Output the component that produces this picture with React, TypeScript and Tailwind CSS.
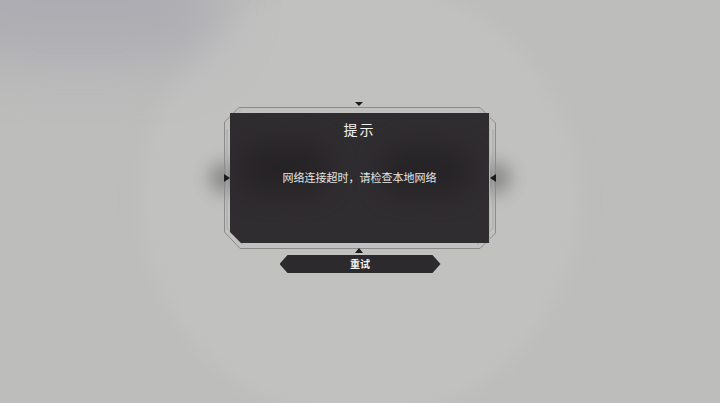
import React from 'react';

const cjk = { fontFamily: '"Noto Sans CJK SC", "Noto Sans", sans-serif' };

function Frame() {
    // decorative chamfered outline + the four little pointer marks
    return (
        <svg className="absolute inset-0 overflow-visible" width="272" height="142" viewBox="0 0 272 142">
            <polygon points="15,0.5 256,0.5 271.5,16 271.5,126 256,141.5 16,141.5 0.5,125 0.5,15" fill="none" stroke="#8c8b8c" strokeWidth="1" />
            <polyline points="3,22 3,121 19,138" fill="none" stroke="#a9a8a9" strokeWidth="1" />
            <polyline points="269,22 269,121 253,138" fill="none" stroke="#a9a8a9" strokeWidth="1" />
            <polyline points="6,12 17,3" fill="none" stroke="#b3b2b3" strokeWidth="1" />
            <polyline points="255,3 266,12" fill="none" stroke="#b3b2b3" strokeWidth="1" />
            <polygon points="131,-5 139,-5 135,-1" fill="#1d1b1d" />
            <polygon points="0,67 6,71 0,75" fill="#1d1b1d" />
            <polygon points="272,67 266,71 272,75" fill="#1d1b1d" />
            <polygon points="131,146 139,146 135,141" fill="#1d1b1d" />
        </svg>
    );
}

export default function App() {
    return (
        <div className="relative w-[720px] h-[403px] overflow-hidden bg-[#bdbdbc]" style={cjk}>
            {/* background glow */}
            <div className="absolute left-[140px] top-[-20px] w-[440px] h-[440px] rounded-full bg-[#c1c1c0] blur-[10px]" />
            <div className="absolute left-[-60px] top-[-60px] w-[280px] h-[120px] rounded-full bg-[#a6a5ae] opacity-70 blur-[30px]" />

            <div className="relative flex flex-col items-center pt-[107px]">
                <div className="relative w-[272px] h-[142px] p-[6px]">
                    {/* side shadows */}
                    <div className="absolute left-[-14px] top-[56px] w-[30px] h-[30px] rounded-full bg-[#2a2a2a] opacity-40 blur-[9px]" />
                    <div className="absolute right-[-14px] top-[56px] w-[30px] h-[30px] rounded-full bg-[#2a2a2a] opacity-40 blur-[9px]" />
                    <Frame />
                    <div className="relative h-full overflow-hidden bg-[#302d30] border-r border-[#b9b8b9] [clip-path:polygon(0_0,100%_0,100%_100%,11px_100%,0_calc(100%_-_11px))]">
                        <div className="absolute left-[10px] top-[30px] w-[90px] h-[50px] rounded-full bg-[#1f1c1f] blur-[14px] opacity-60" />
                        <div className="absolute left-[150px] top-[35px] w-[90px] h-[45px] rounded-full bg-[#1f1c1f] blur-[14px] opacity-60" />
                        <div className="relative flex flex-col items-center">
                            <div className="pt-[5px] text-[14px] leading-[22px] text-[#f2f2f2] tracking-[2px]">提示</div>
                            <div className="mt-[30px] text-[11px] leading-[14px] text-[#e6e6e6]">网络连接超时，请检查本地网络</div>
                        </div>
                    </div>
                </div>

                <button className="mt-[6px] w-[161px] h-[18px] bg-[#2d2a2d] text-[#f4f4f4] text-[10px] leading-[18px] font-semibold [clip-path:polygon(8px_0,calc(100%_-_8px)_0,100%_50%,calc(100%_-_8px)_100%,8px_100%,0_50%)]">
                    重试
                </button>
            </div>
        </div>
    );
}
